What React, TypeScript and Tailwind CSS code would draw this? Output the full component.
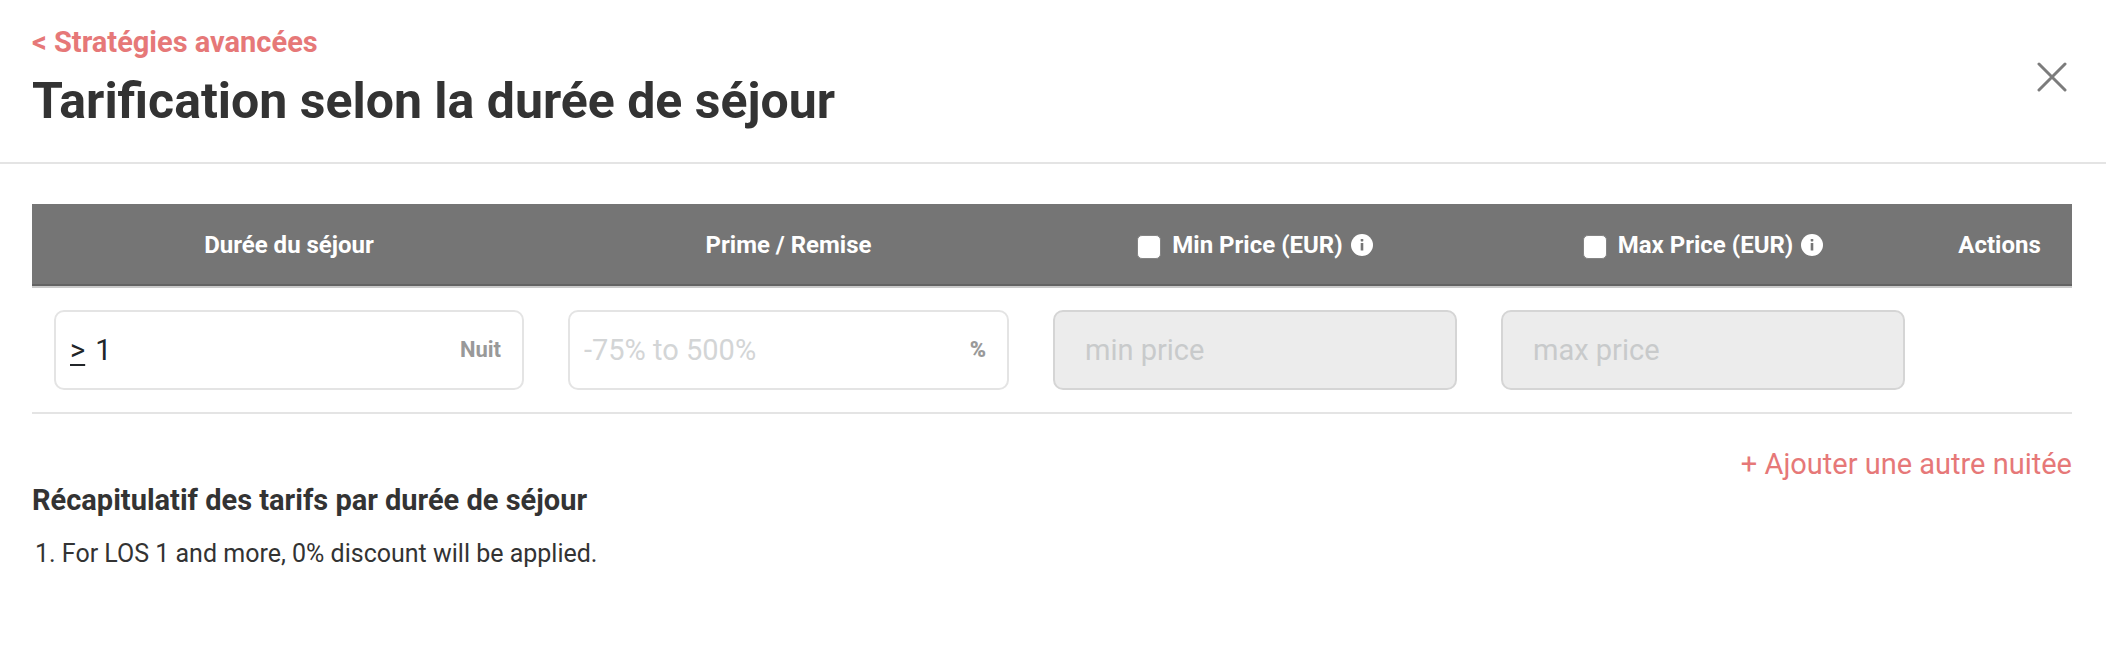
import React, { useState } from 'react';

interface PriceHeaderProps {
  id: string;
  label: string;
  checked: boolean;
  onChange: (checked: boolean) => void;
}

function InfoIcon() {
  return (
    <svg viewBox="0 0 22 22" className="h-[22px] w-[22px]" aria-hidden="true">
      <circle cx="11" cy="11" r="11" fill="#fff" />
      <rect x="9.7" y="5" width="2.6" height="2.4" rx="0.6" fill="#757575" />
      <rect x="9.7" y="9" width="2.6" height="7.6" rx="0.4" fill="#757575" />
    </svg>
  );
}

function PriceHeader({ id, label, checked, onChange }: PriceHeaderProps) {
  return (
    <div className="flex items-center justify-center">
      <input
        id={id}
        type="checkbox"
        checked={checked}
        onChange={(e) => onChange(e.target.checked)}
        className="mt-1 h-6 w-6 appearance-none rounded-[5px] border border-[#848484] bg-white checked:bg-[#e67878]"
      />
      <label htmlFor={id} className="ml-[11px]">
        {label}
      </label>
      <button type="button" aria-label={`About ${label}`} className="ml-2">
        <InfoIcon />
      </button>
    </div>
  );
}

export default function App() {
  const [nights, setNights] = useState('1');
  const [discount, setDiscount] = useState('');
  const [minEnabled, setMinEnabled] = useState(false);
  const [maxEnabled, setMaxEnabled] = useState(false);

  return (
    <div className="min-h-screen bg-white font-[Roboto,sans-serif] text-[#333]">
      <header className="flex items-start justify-between border-b-2 border-[#e4e4e4] pt-6 pr-[34px] pb-[30px] pl-8">
        <div>
          <a href="#" className="block text-[29px] leading-9 font-bold text-[#e67878]">
            &lt; Stratégies avancées
          </a>
          <h1 className="mt-[10px] text-[50px] leading-[62px] font-bold">
            Tarification selon la durée de séjour
          </h1>
        </div>
        <button type="button" aria-label="Fermer" className="mt-[38px] mr-[5px]">
          <svg
            viewBox="0 0 30 30"
            className="h-[30px] w-[30px]"
            fill="none"
            stroke="#7c7c7c"
            strokeWidth="3"
            strokeLinecap="round"
          >
            <path d="M2 2l26 26M28 2l-26 26" />
          </svg>
        </button>
      </header>

      <main className="pt-10 pr-[34px] pl-8">
        <table className="w-full table-fixed border-separate border-spacing-0">
          <colgroup>
            <col className="w-[514px]" />
            <col className="w-[485px]" />
            <col className="w-[448px]" />
            <col className="w-[448px]" />
            <col className="w-[145px]" />
          </colgroup>
          <thead className="bg-[#757575] text-[24px] leading-8 text-white">
            <tr className="h-[84px] *:border-b-2 *:border-[#cacaca] *:p-0 *:font-bold *:shadow-[inset_0_-2px_0_#636363]">
              <th scope="col">Durée du séjour</th>
              <th scope="col">Prime / Remise</th>
              <th scope="col">
                <PriceHeader
                  id="min-price"
                  label="Min Price (EUR)"
                  checked={minEnabled}
                  onChange={setMinEnabled}
                />
              </th>
              <th scope="col">
                <PriceHeader
                  id="max-price"
                  label="Max Price (EUR)"
                  checked={maxEnabled}
                  onChange={setMaxEnabled}
                />
              </th>
              <th scope="col">Actions</th>
            </tr>
          </thead>
          <tbody className="text-[29px] leading-9">
            <tr className="*:border-b-2 *:border-[#e4e4e4] *:px-[22px] *:py-[22px]">
              <td>
                <div className="flex h-20 items-center rounded-[10px] border-2 border-[#e4e4e4] pr-[21px] pl-[14px] text-[#212529]">
                  <span className="underline underline-offset-4">&gt;</span>
                  <input
                    aria-label="Durée du séjour"
                    value={nights}
                    onChange={(e) => setNights(e.target.value)}
                    className="ml-[10px] min-w-0 flex-1 outline-none"
                  />
                  <span className="text-[22px] font-bold text-[#999]">Nuit</span>
                </div>
              </td>
              <td>
                <div className="flex h-20 items-center rounded-[10px] border-2 border-[#e4e4e4] pr-[21px] pl-[14px]">
                  <input
                    aria-label="Prime / Remise"
                    placeholder="-75% to 500%"
                    value={discount}
                    onChange={(e) => setDiscount(e.target.value)}
                    className="min-w-0 flex-1 outline-none placeholder:text-[#d3d5d6]"
                  />
                  <span className="text-[22px] font-black text-[#999]">%</span>
                </div>
              </td>
              <td>
                <input
                  aria-label="Min Price"
                  placeholder="min price"
                  disabled={!minEnabled}
                  className="block h-20 w-full rounded-[10px] border-2 border-[#d5d5d5] px-[30px] outline-none placeholder:text-[#c8cacb] disabled:bg-[#ececec]"
                />
              </td>
              <td>
                <input
                  aria-label="Max Price"
                  placeholder="max price"
                  disabled={!maxEnabled}
                  className="block h-20 w-full rounded-[10px] border-2 border-[#d5d5d5] px-[30px] outline-none placeholder:text-[#c8cacb] disabled:bg-[#ececec]"
                />
              </td>
              <td />
            </tr>
          </tbody>
        </table>

        <div className="flex justify-end pt-8">
          <button type="button" className="text-[29px] leading-9 text-[#e67878]">
            + Ajouter une autre nuitée
          </button>
        </div>

        <section>
          <h2 className="text-[29px] leading-9 font-bold">
            Récapitulatif des tarifs par durée de séjour
          </h2>
          <ol className="mt-[18px] list-inside list-decimal pl-[3px] text-[25px] leading-9">
            <li>For LOS 1 and more, 0% discount will be applied.</li>
          </ol>
        </section>
      </main>
    </div>
  );
}
